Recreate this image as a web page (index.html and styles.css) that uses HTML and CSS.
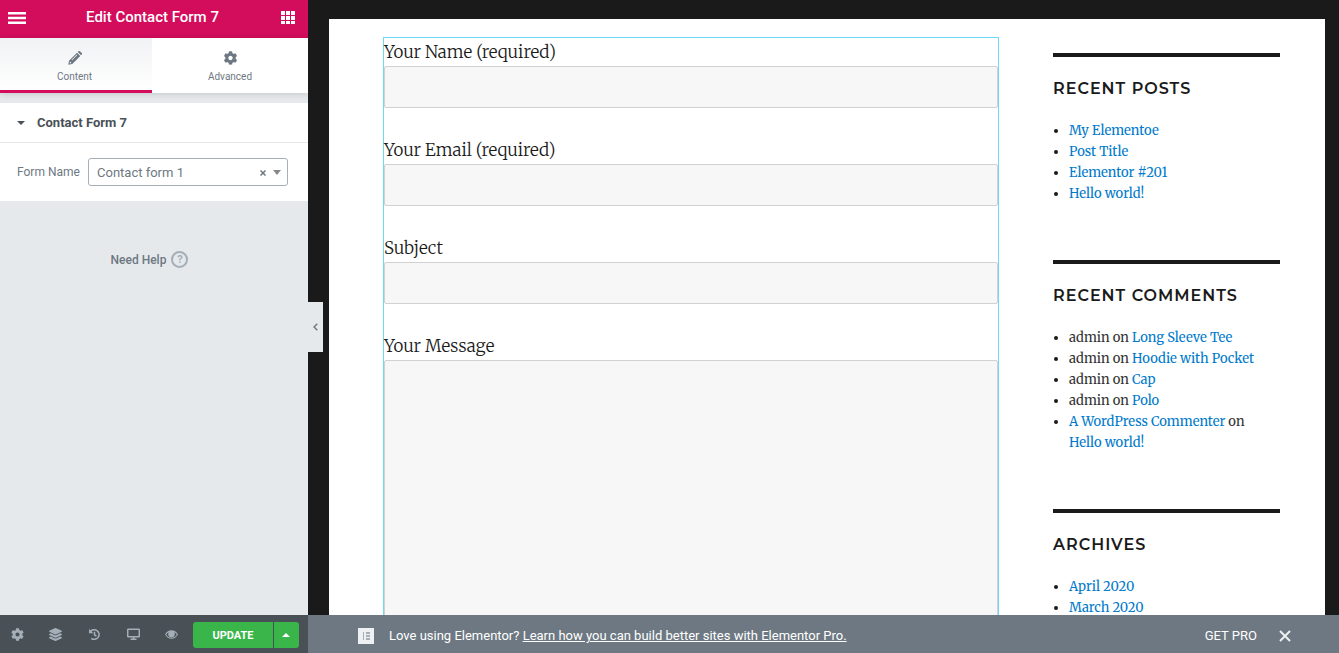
FILE: index.html
```html
<!DOCTYPE html>
<html lang="en">
<head>
  <meta charset="UTF-8">
  <meta name="viewport" content="width=device-width, initial-scale=1">
  <title>Elementor | Contact Form 7</title>
  <link rel="stylesheet" href="styles.css">
</head>
<body>

  <!-- shared icons -->
  <svg class="sprite" aria-hidden="true">
    <symbol id="icon-cog" viewBox="0 0 512 512">
      <path d="M487.4 315.7l-42.6-24.6c4.3-23.2 4.3-47 0-70.2l42.6-24.6c4.9-2.8 7.1-8.6 5.5-14-11.1-35.6-30-67.8-54.7-94.6-3.8-4.1-10-5.1-14.8-2.3L380.8 110c-17.9-15.4-38.5-27.3-60.8-35.1V25.8c0-5.6-3.9-10.5-9.4-11.7-36.7-8.2-74.3-7.8-109.2 0-5.5 1.2-9.4 6.1-9.4 11.7V75c-22.2 7.9-42.8 19.8-60.8 35.1L88.7 85.5c-4.9-2.8-11-1.9-14.8 2.3-24.7 26.7-43.6 58.9-54.7 94.6-1.7 5.4.6 11.2 5.5 14L67.3 221c-4.3 23.2-4.3 47 0 70.2l-42.6 24.6c-4.9 2.8-7.1 8.6-5.5 14 11.1 35.6 30 67.8 54.7 94.6 3.8 4.1 10 5.1 14.8 2.3l42.6-24.6c17.9 15.4 38.5 27.3 60.8 35.1v49.2c0 5.6 3.9 10.5 9.4 11.7 36.7 8.2 74.3 7.8 109.2 0 5.5-1.2 9.4-6.1 9.4-11.7v-49.2c22.2-7.9 42.8-19.8 60.8-35.1l42.6 24.6c4.9 2.8 11 1.9 14.8-2.3 24.7-26.7 43.6-58.9 54.7-94.6 1.5-5.5-.7-11.3-5.6-14.1zM256 336c-44.1 0-80-35.9-80-80s35.9-80 80-80 80 35.9 80 80-35.9 80-80 80z"/>
    </symbol>
  </svg>

  <aside class="panel">
    <header class="panel-header">
      <button class="header-button" aria-label="Menu">
        <svg width="18" height="12" viewBox="0 0 18 12"><path d="M0 0h18v2.500H0zM0 4.700h18v2.500H0zM0 9.500h18V12H0z"/></svg>
      </button>
      <h1>Edit Contact Form 7</h1>
      <button class="header-button" aria-label="Widgets">
        <svg width="14" height="14" viewBox="0 0 14 14"><path d="M0 0h4v4H0zM5 0h4v4H5zM10 0h4v4h-4zM0 5h4v4H0zM5 5h4v4H5zM10 5h4v4h-4zM0 10h4v3H0zM5 10h4v3H5zM10 10h4v3h-4z"/></svg>
      </button>
    </header>

    <nav class="tabs">
      <button class="tab active">
        <svg width="14" height="14" viewBox="0 0 14 14"><path fill-rule="evenodd" d="M9 1.700L12.300 5l-8 8L.3 13.700 1 9.700zM2 10.500l-.4 1.900 1.900-.4zM8.700 3.600L3.600 8.700l.5.500L9.200 4.100zM9.700 1l.8-.8q.7-.5 1.400 0l1.900 1.900q.5.700 0 1.400L13 4.300z"/></svg>
        <span>Content</span>
      </button>
      <button class="tab">
        <svg width="15" height="15"><use href="#icon-cog"/></svg>
        <span>Advanced</span>
      </button>
    </nav>

    <section class="panel-section">
      <h2 class="section-title">
        <svg width="8" height="4" viewBox="0 0 8 4"><path d="M0 0h8L4 4z"/></svg>
        Contact Form 7
      </h2>
      <div class="control">
        <label for="form-name">Form Name</label>
        <div class="select-box">
          <select id="form-name">
            <option>Contact form 1</option>
          </select>
          <button class="clear" aria-label="Clear">
            <svg width="6" height="6" viewBox="0 0 6 6"><path d="M.5.5l5 5M5.500.5l-5 5"/></svg>
          </button>
          <svg class="arrow" width="8" height="5" viewBox="0 0 8 5"><path d="M0 0h8L4 5z"/></svg>
        </div>
      </div>
    </section>

    <a class="need-help" href="#">Need Help <span class="question">?</span></a>

    <footer class="panel-footer">
      <button class="tool" aria-label="Settings">
        <svg width="13" height="13"><use href="#icon-cog"/></svg>
      </button>
      <button class="tool" aria-label="Navigator">
        <svg width="13" height="13" viewBox="0 0 512 512"><path d="M12.41 148.02l232.94 105.67c6.8 3.09 14.49 3.09 21.29 0l232.94-105.67c16.55-7.51 16.55-32.52 0-40.03L266.65 2.31a25.607 25.607 0 0 0-21.29 0L12.41 107.98c-16.55 7.51-16.55 32.53 0 40.04zm487.18 88.28l-58.09-26.33-161.64 73.27c-7.56 3.43-15.59 5.17-23.86 5.17s-16.29-1.74-23.86-5.17L70.51 209.97l-58.1 26.33c-16.55 7.5-16.55 32.5 0 40l232.94 105.59c6.8 3.08 14.49 3.08 21.29 0L499.59 276.3c16.55-7.5 16.55-32.5 0-40zm0 127.8l-57.87-26.23-161.86 73.37c-7.56 3.43-15.59 5.17-23.86 5.17s-16.29-1.74-23.86-5.17L70.29 337.87 12.41 364.1c-16.55 7.5-16.55 32.5 0 40l232.94 105.59c6.8 3.08 14.49 3.08 21.29 0L499.59 404.1c16.55-7.5 16.55-32.5 0-40z"/></svg>
      </button>
      <button class="tool" aria-label="History">
        <svg class="line" width="13" height="13" viewBox="0 0 13 13"><path d="M2.200 4A4.800 4.800 0 1 1 3.300 10.300"/><path d="M6.500 3.800v3l1.900 1.200"/><path class="solid" d="M1 1v4.300h4.300z"/></svg>
      </button>
      <button class="tool" aria-label="Responsive Mode">
        <svg class="line" width="13" height="12" viewBox="0 0 13 12"><rect x=".7" y="1.200" width="11.600" height="7.600" rx=".5"/><path d="M3.500 11.200h6M6.500 9v2"/></svg>
      </button>
      <button class="tool" aria-label="Preview Changes">
        <svg width="13" height="9" viewBox="0 0 13 9"><path fill-rule="evenodd" d="M0 4.500Q2.500.3 6.500.3T13 4.500Q10.500 8.700 6.500 8.700T0 4.500zm1.200 0q2 3.200 5.300 3.200t5.300-3.200Q11 3 9.200 2q.6.8.6 2a3.300 3.300 0 0 1-6.600 0q0-1.200.6-2Q2.200 3 1.200 4.500z"/><circle cx="6.500" cy="4" r="2.500"/></svg>
      </button>
      <div class="update-group">
        <button class="update">UPDATE</button>
        <button class="update-more" aria-label="Save options">
          <svg width="8" height="4" viewBox="0 0 8 4"><path d="M4 0l4 4H0z"/></svg>
        </button>
      </div>
    </footer>
  </aside>

  <main class="preview">
    <button class="panel-toggle" aria-label="Hide panel">
      <svg width="5" height="8" viewBox="0 0 5 8"><path d="M4.300.8L1 4l3.300 3.200"/></svg>
    </button>

    <div class="page">
      <form class="contact-form">
        <label for="your-name">Your Name (required)</label>
        <input type="text" id="your-name">
        <label for="your-email">Your Email (required)</label>
        <input type="email" id="your-email">
        <label for="your-subject">Subject</label>
        <input type="text" id="your-subject">
        <label for="your-message">Your Message</label>
        <textarea id="your-message" rows="10"></textarea>
      </form>

      <aside class="sidebar">
        <section class="widget">
          <h2>Recent Posts</h2>
          <ul>
            <li><a href="#">My Elementoe</a></li>
            <li><a href="#">Post Title</a></li>
            <li><a href="#">Elementor #201</a></li>
            <li><a href="#">Hello world!</a></li>
          </ul>
        </section>
        <section class="widget">
          <h2>Recent Comments</h2>
          <ul>
            <li>admin on <a href="#">Long Sleeve Tee</a></li>
            <li>admin on <a href="#">Hoodie with Pocket</a></li>
            <li>admin on <a href="#">Cap</a></li>
            <li>admin on <a href="#">Polo</a></li>
            <li><a href="#">A WordPress Commenter</a> on <a href="#">Hello world!</a></li>
          </ul>
        </section>
        <section class="widget">
          <h2>Archives</h2>
          <ul>
            <li><a href="#">April 2020</a></li>
            <li><a href="#">March 2020</a></li>
          </ul>
        </section>
      </aside>
    </div>

    <div class="pro-bar">
      <svg class="logo" width="16" height="16" viewBox="0 0 16 16"><path fill="#eff0f2" d="M0 0h16v16H0z"/><path fill="#a4afb7" d="M5 4h1v8H5zM8 4h4v2H8zM8 7h4v2H8zM8 10h4v2H8z"/></svg>
      <p>Love using Elementor? <a href="#">Learn how you can build better sites with Elementor Pro.</a></p>
      <a class="get-pro" href="#">GET PRO</a>
      <button class="close" aria-label="Close">
        <svg width="12" height="12" viewBox="0 0 12 12"><path d="M1 1l10 10M11 1L1 11"/></svg>
      </button>
    </div>
  </main>

</body>
</html>
```
FILE: styles.css
```css
* {
  box-sizing: border-box;
}
body {
  margin: 0;
  height: 100vh;
  display: flex;
  overflow: hidden;
  font-family: Roboto, Arial, sans-serif;
  font-size: 13px;
  color: #6d7882;
}
h1, h2, p, ul {
  margin: 0;
}
button {
  margin: 0;
  padding: 0;
  border: none;
  background: none;
  font-family: inherit;
  color: inherit;
  cursor: pointer;
}
svg {
  display: block;
  fill: currentColor;
}
.sprite {
  position: absolute;
  width: 0;
  height: 0;
}

/* Editor panel */
.panel {
  width: 308px;
  flex-shrink: 0;
  display: flex;
  flex-direction: column;
  background-color: #e6e9ec;
}
.panel-header {
  height: 38px;
  padding: 0 13px 4px 8px;
  display: flex;
  align-items: center;
  justify-content: space-between;
  background-color: #d30c5c;
  color: #fff;
}
.header-button {
  padding-top: 1px;
}
.panel-header h1 {
  padding-right: 2px;
  font-size: 15px;
  font-weight: 500;
}
.tabs {
  height: 55px;
  display: flex;
  background-color: #fff;
  box-shadow: 0 1px 6px rgba(0, 0, 0, 0.15);
}
.tab {
  flex: 1;
  padding-top: 6px;
  display: flex;
  flex-direction: column;
  align-items: center;
  justify-content: center;
  gap: 6px;
  border-bottom: 3px solid transparent;
  font-size: 10px;
  line-height: 12px;
}
.tab svg {
  height: 14px;
}
.tab.active {
  flex: 0 0 152px;
  padding-right: 3px;
  background-image: linear-gradient(#f1f2f4, #fff);
  border-bottom-color: #d30c5c;
}
.panel-section {
  margin-top: 10px;
  background-color: #fff;
}
.section-title {
  height: 40px;
  padding: 0 17px;
  display: flex;
  align-items: center;
  gap: 12px;
  border-bottom: 1px solid #e6e9ec;
  font-size: 13px;
  font-weight: 700;
  color: #495157;
}
.control {
  padding: 15px 20px 15px 17px;
  display: flex;
  align-items: center;
  justify-content: space-between;
  font-size: 12px;
}
.select-box {
  position: relative;
  width: 200px;
}
.select-box select {
  display: block;
  width: 100%;
  height: 28px;
  padding: 0 8px;
  appearance: none;
  border: 1px solid #a4afb7;
  border-radius: 3px;
  background-color: #fff;
  font-family: inherit;
  font-size: 13px;
  color: #6d7882;
}
.clear {
  position: absolute;
  top: 12px;
  right: 22px;
}
.clear svg {
  stroke: #6d7882;
  stroke-width: 1.5;
}
.arrow {
  position: absolute;
  top: 12px;
  right: 7px;
  color: #888;
}
.need-help {
  margin: 50px 9px 0 0;
  display: flex;
  align-items: center;
  justify-content: center;
  gap: 5px;
  font-size: 12px;
  font-weight: 500;
  color: #6d7882;
  text-decoration: none;
}
.question {
  width: 17px;
  height: 17px;
  border: 2px solid #a4afb7;
  border-radius: 50%;
  font-size: 11px;
  font-weight: 700;
  line-height: 13px;
  text-align: center;
  color: #a4afb7;
}
.panel-footer {
  height: 38px;
  margin-top: auto;
  padding-right: 9px;
  display: flex;
  align-items: center;
  background-color: #495157;
  color: #a4afb7;
}
.tool {
  flex: 1;
  height: 38px;
  display: flex;
  align-items: center;
  justify-content: center;
  padding-right: 4px;
}
.line {
  fill: none;
  stroke: currentColor;
  stroke-width: 1.5;
}
.line .solid {
  fill: currentColor;
  stroke: none;
}
.update-group {
  display: flex;
  gap: 1px;
  height: 26px;
  margin-top: 2px;
  color: #fff;
}
.update {
  width: 80px;
  border-radius: 3px 0 0 3px;
  background-color: #39b54a;
  font-size: 11px;
  font-weight: 700;
}
.update-more {
  width: 25px;
  display: flex;
  align-items: center;
  justify-content: center;
  border-radius: 0 3px 3px 0;
  background-color: #39b54a;
}

/* Site preview */
.preview {
  position: relative;
  flex: 1;
  min-width: 0;
  display: flex;
  flex-direction: column;
  background-color: #1a1a1a;
}
.panel-toggle {
  position: absolute;
  top: calc(50% - 25px);
  left: 0;
  width: 15px;
  height: 50px;
  display: flex;
  align-items: center;
  justify-content: center;
  background-color: #e6e9ec;
}
.panel-toggle svg {
  fill: none;
  stroke: #6d7882;
  stroke-width: 1.5;
}
.page {
  flex: 1;
  min-height: 0;
  overflow: hidden;
  margin: 19px 14px 0 21px;
  padding: 18px 45px 0 54px;
  display: flex;
  align-items: flex-start;
  gap: 54px;
  background-color: #fff;
  font-family: Merriweather, "DejaVu Serif Condensed", "DejaVu Serif", serif;
  color: #1a1a1a;
}
.contact-form {
  flex: 1;
  border: 1px solid #71d7f7;
  font-size: 17px;
  font-weight: 300;
  line-height: 28px;
}
.contact-form label {
  display: block;
}
.contact-form input,
.contact-form textarea {
  display: block;
  width: 100%;
  margin-bottom: 28px;
  padding: 10px;
  border: 1px solid #d1d1d1;
  border-radius: 2px;
  background-color: #f7f7f7;
  font: inherit;
}
.contact-form input {
  height: 42px;
}
.contact-form textarea {
  resize: none;
}
.sidebar {
  width: 227px;
  flex-shrink: 0;
  padding-top: 16px;
}
.widget {
  margin-bottom: 56px;
  padding-top: 22px;
  border-top: 4px solid #1a1a1a;
}
.widget h2 {
  margin-bottom: 21px;
  font-family: Montserrat, Inter, sans-serif;
  font-size: 16px;
  font-weight: 600;
  line-height: 20px;
  letter-spacing: 1px;
  text-transform: uppercase;
}
.widget ul {
  padding: 0 12px 0 16px;
  font-size: 13px;
  line-height: 21px;
}
.widget li {
  color: #333;
}
.widget li::marker {
  color: #1a1a1a;
}
.widget a {
  color: #007acc;
  text-decoration: none;
}

/* Elementor Pro notice */
.pro-bar {
  height: 38px;
  flex-shrink: 0;
  padding: 3px 48px 0 50px;
  display: flex;
  align-items: center;
  background-color: #6d7882;
  color: #fff;
}
.pro-bar p {
  margin-left: 15px;
}
.pro-bar a {
  color: #fff;
}
.pro-bar .get-pro {
  margin-left: auto;
  text-decoration: none;
}
.close {
  margin-left: 22px;
}
.close svg {
  stroke: #eff0f2;
  stroke-width: 2;
}
```
